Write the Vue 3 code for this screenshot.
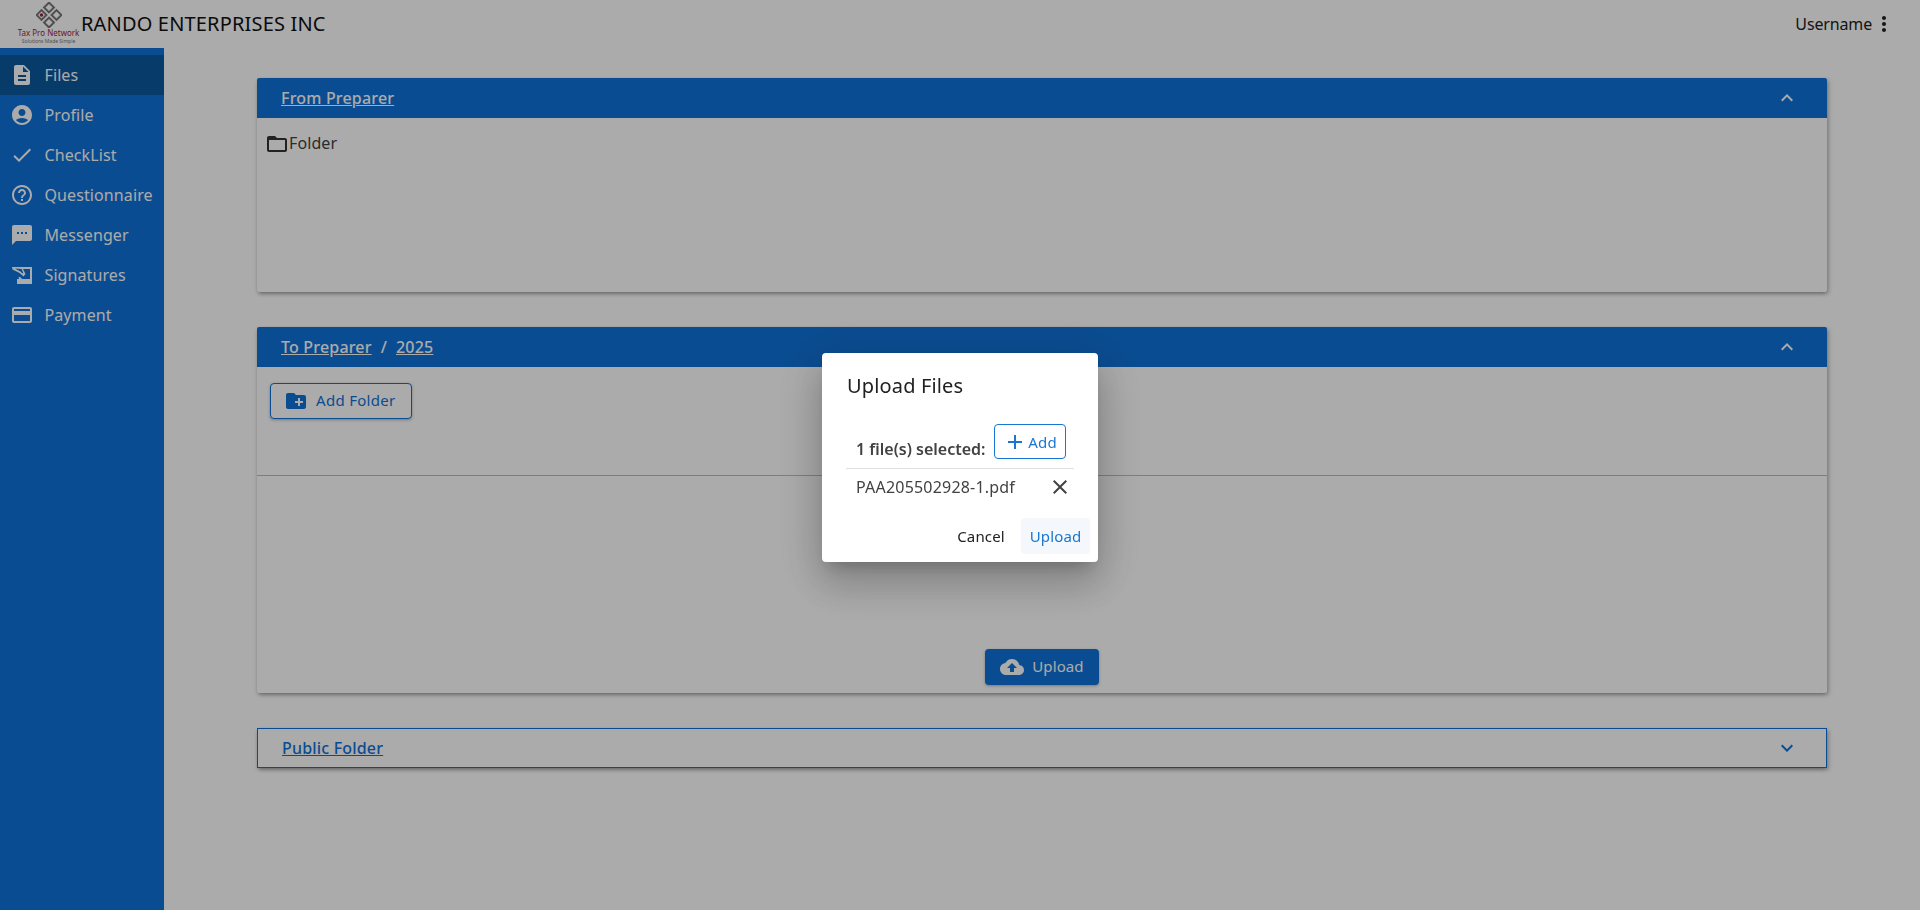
<script setup>
const menu = [
  { label: 'Files', active: true, d: 'M14 2H6c-1.1 0-1.99.9-1.99 2L4 20c0 1.1.89 2 1.99 2H18c1.1 0 2-.9 2-2V8l-6-6zm2 16H8v-2h8v2zm0-4H8v-2h8v2zm-3-5V3.5L18.5 9H13z' },
  { label: 'Profile', d: 'M12 2C6.48 2 2 6.48 2 12s4.48 10 10 10 10-4.48 10-10S17.52 2 12 2zm0 4c1.93 0 3.5 1.57 3.5 3.5S13.93 13 12 13s-3.5-1.57-3.5-3.5S10.07 6 12 6zm0 14c-2.03 0-4.43-.82-6.14-2.88C7.55 15.8 9.68 15 12 15s4.45.8 6.14 2.12C16.43 19.18 14.03 20 12 20z' },
  { label: 'CheckList', d: 'M9 16.17 4.83 12l-1.42 1.41L9 19 21 7l-1.41-1.41z' },
  { label: 'Questionnaire', d: 'M11 18h2v-2h-2v2zm1-16C6.48 2 2 6.48 2 12s4.48 10 10 10 10-4.48 10-10S17.52 2 12 2zm0 18c-4.41 0-8-3.59-8-8s3.59-8 8-8 8 3.59 8 8-3.59 8-8 8zm0-14c-2.21 0-4 1.79-4 4h2c0-1.1.9-2 2-2s2 .9 2 2c0 2-3 1.75-3 5h2c0-2.25 3-2.5 3-5 0-2.21-1.79-4-4-4z' },
  { label: 'Messenger', d: 'M20 2H4c-1.1 0-1.99.9-1.99 2L2 22l4-4h14c1.1 0 2-.9 2-2V4c0-1.1-.9-2-2-2zM9 11H7V9h2v2zm4 0h-2V9h2v2zm4 0h-2V9h2v2z' },
  { label: 'Signatures', d: 'M2 4h20v17H7v-5h2l-.5-2.2 2 .4L12 16h8V6h-7l2.5 5-2 2.5L9.500 10 2.500 6.500zM5 5.500l5.500 3 2 2 .7-1L11.500 6z' },
  { label: 'Payment', d: 'M20 4H4c-1.11 0-1.99.89-1.99 2L2 18c0 1.11.89 2 2 2h16c1.11 0 2-.89 2-2V6c0-1.11-.89-2-2-2zm0 14H4v-6h16v6zm0-10H4V6h16v2z' },
]
const less = 'M12 8l-6 6 1.41 1.41L12 10.83l4.59 4.58L18 14z'
const more = 'M16.59 8.59 12 13.17 7.41 8.59 6 10l6 6 6-6z'
</script>

<template>
  <div class="page">
    <header class="topbar">
      <div class="brand">
        <div class="logo">
          <svg class="logo-mark" viewBox="0 0 26 26">
            <g fill="none" stroke="#777" stroke-width="2">
              <rect x="9.500" y="2" width="7" height="7" transform="rotate(45 13 5.500)" />
              <rect x="2" y="9.500" width="7" height="7" transform="rotate(45 5.500 13)" />
              <rect x="17" y="9.500" width="7" height="7" transform="rotate(45 20.500 13)" />
              <rect x="9.500" y="17" width="7" height="7" transform="rotate(45 13 20.500)" />
            </g>
            <circle cx="5.500" cy="13" r="1.800" fill="#a3243a" />
          </svg>
          <span class="logo-name">Tax Pro Network</span>
          <span class="logo-tag">Solutions Made Simple</span>
        </div>
        <span class="company">RANDO ENTERPRISES INC</span>
      </div>
      <div class="user">
        <span>Username</span>
        <svg class="i24" viewBox="0 0 24 24"><path d="M12 8c1.1 0 2-.9 2-2s-.9-2-2-2-2 .9-2 2 .9 2 2 2zm0 2c-1.1 0-2 .9-2 2s.9 2 2 2 2-.9 2-2-.9-2-2-2zm0 6c-1.1 0-2 .9-2 2s.9 2 2 2 2-.9 2-2-.9-2-2-2z" /></svg>
      </div>
    </header>

    <div class="body">
      <nav class="sidebar">
        <a v-for="m in menu" :key="m.label" class="nav-item" :class="{ active: m.active }">
          <svg class="i24" viewBox="0 0 24 24"><path :d="m.d" /></svg>
          <span>{{ m.label }}</span>
        </a>
      </nav>

      <main class="main">
        <section class="panel panel-a">
          <div class="panel-head">
            <div class="crumbs"><a>From Preparer</a></div>
            <svg class="i24" viewBox="0 0 24 24"><path :d="less" /></svg>
          </div>
          <div class="panel-a-body">
            <div class="folder">
              <svg class="i24" viewBox="0 0 24 24"><path d="M20 6h-8l-2-2H4c-1.1 0-1.99.9-1.99 2L2 18c0 1.1.9 2 2 2h16c1.1 0 2-.9 2-2V8c0-1.1-.9-2-2-2zm0 12H4V8h16v10z" /></svg>
              <span>Folder</span>
            </div>
          </div>
        </section>

        <section class="panel panel-b">
          <div class="panel-head">
            <div class="crumbs"><a>To Preparer</a><span class="sep">/</span><a>2025</a></div>
            <svg class="i24" viewBox="0 0 24 24"><path :d="less" /></svg>
          </div>
          <div class="toolbar">
            <button class="btn-outline">
              <svg class="i24" viewBox="0 0 24 24"><path d="M20 6h-8l-2-2H4c-1.11 0-1.99.89-1.99 2L2 18c0 1.11.89 2 2 2h16c1.11 0 2-.89 2-2V8c0-1.11-.89-2-2-2zm-1 8h-3v3h-2v-3h-3v-2h3V9h2v3h3v2z" /></svg>
              <span>Add Folder</span>
            </button>
          </div>
          <div class="drop">
            <button class="btn-solid">
              <svg class="i24" viewBox="0 0 24 24"><path d="M19.35 10.04C18.67 6.59 15.64 4 12 4 9.11 4 6.6 5.64 5.35 8.04 2.34 8.36 0 10.91 0 14c0 3.31 2.69 6 6 6h13c2.76 0 5-2.24 5-5 0-2.64-2.05-4.78-4.65-4.96zM14 13v4h-4v-4H7l5-5 5 5h-3z" /></svg>
              <span>Upload</span>
            </button>
          </div>
        </section>

        <section class="panel panel-c">
          <div class="crumbs"><a>Public Folder</a></div>
          <svg class="i24" viewBox="0 0 24 24"><path :d="more" /></svg>
        </section>
      </main>
    </div>

    <div class="backdrop">
      <div class="dialog">
        <h2 class="dialog-title">Upload Files</h2>
        <div class="dialog-content">
          <div class="sel-row">
            <strong>1 file(s) selected:</strong>
            <button class="btn-add">
              <svg class="i24" viewBox="0 0 24 24"><path d="M19 13h-6v6h-2v-6H5v-2h6V5h2v6h6v2z" /></svg>
              <span>Add</span>
            </button>
          </div>
          <div class="file-row">
            <span>PAA205502928-1.pdf</span>
            <svg class="i24" viewBox="0 0 24 24"><path d="M19 6.41 17.59 5 12 10.59 6.41 5 5 6.41 10.59 12 5 17.59 6.41 19 12 13.41 17.59 19 19 17.59 13.41 12z" /></svg>
          </div>
        </div>
        <div class="dialog-actions">
          <button class="btn-text cancel">Cancel</button>
          <button class="btn-text primary">Upload</button>
        </div>
      </div>
    </div>
  </div>
</template>

<style>
html, body { margin: 0; background: #fff; }
</style>

<style scoped>
* { box-sizing: border-box; }
.page {
  height: 910px;
  display: flex;
  flex-direction: column;
  font-family: "Noto Sans", "Open Sans", sans-serif;
  font-size: 16px;
  color: #212121;
  overflow: hidden;
  background: #fff;
}
.i24 { width: 24px; height: 24px; fill: currentColor; flex: none; display: block; }
button { font-family: inherit; cursor: pointer; }

.topbar {
  height: 48px;
  flex: none;
  display: flex;
  align-items: center;
  justify-content: space-between;
  padding: 0 24px 0 17px;
  background: #fff;
}
.brand { display: flex; align-items: center; }
.logo {
  width: 63px;
  height: 42px;
  margin-top: -3px;
  display: flex;
  flex-direction: column;
  align-items: center;
}
.logo-mark { width: 26px; height: 26px; flex: none; }
.logo-name { font-size: 8px; line-height: 9px; color: #a3243a; white-space: nowrap; }
.logo-tag { font-size: 5px; line-height: 7px; color: #777; white-space: nowrap; margin-top: 1px; }
.company { font-size: 20px; letter-spacing: .17px; color: #111; margin-left: 1px; margin-top: -1px; }
.user { display: flex; align-items: center; font-size: 16px; letter-spacing: -.15px; margin-top: -1px; color: #212121; }

.body { flex: 1; display: flex; min-height: 0; }
.sidebar {
  width: 164px;
  flex: none;
  background: #1072d8;
  padding-top: 7px;
  color: #fff;
}
.nav-item {
  height: 40px;
  display: flex;
  align-items: center;
  gap: 10.500px;
  padding-left: 10px;
  font-size: 16px;
  letter-spacing: .1px;
}
.nav-item.active { background: #0b589f; }

.main {
  flex: 1;
  padding: 30px 93px 0;
  display: flex;
  flex-direction: column;
  gap: 35px;
}
.panel {
  border-radius: 2px;
  background: #fff;
  box-shadow: 0 2px 4px -1px rgba(0,0,0,.3), 2px 2px 4px rgba(0,0,0,.2);
}
.panel-head {
  height: 40px;
  background: #1072d8;
  color: #fff;
  display: flex;
  align-items: center;
  justify-content: space-between;
  padding: 0 28px 0 24px;
  border-radius: 2px 2px 0 0;
}
.crumbs { display: flex; gap: 9px; font-size: 16px; font-weight: 500; letter-spacing: .18px; }
.crumbs a { text-decoration: underline; }
.panel-a { height: 214px; }
.panel-a-body { padding: 13px 8px; }
.folder { display: flex; align-items: flex-start; color: #424242; line-height: 24px; letter-spacing: .1px; }
.folder .i24 { margin-top: 1px; color: #333; }
.panel-b { height: 366px; display: flex; flex-direction: column; }
.toolbar { height: 109px; flex: none; padding: 16px 13px; border-bottom: 1px solid #bdbdbd; }
.btn-outline {
  height: 36px;
  width: 142px;
  display: flex;
  align-items: center;
  gap: 8px;
  padding: 0 13px;
  background: #fff;
  border: 1px solid #1072d8;
  border-radius: 4px;
  color: #1072d8;
  font-size: 15px;
  letter-spacing: .3px;
  box-shadow: 0 1px 3px rgba(0,0,0,.3);
}
.btn-outline span, .btn-solid span { margin-bottom: 2px; }
.drop { flex: 1; display: flex; align-items: flex-end; justify-content: center; padding-bottom: 8px; }
.btn-solid {
  height: 36px;
  width: 114px;
  display: flex;
  align-items: center;
  justify-content: center;
  gap: 8px;
  background: #1072d8;
  color: #fff;
  border: 0;
  border-radius: 4px;
  font-size: 15px;
  letter-spacing: .1px;
  padding: 0 0 0 0;
  box-shadow: 0 1px 3px rgba(0,0,0,.3);
}
.panel-c {
  height: 40px;
  border: 1px solid #1072d8;
  border-radius: 0;
  color: #1072d8;
  display: flex;
  align-items: center;
  justify-content: space-between;
  padding: 0 27px 0 24px;
}

.backdrop {
  position: fixed;
  inset: 0;
  background: rgba(0,0,0,.33);
  display: flex;
  align-items: flex-start;
  justify-content: center;
  padding-top: 353px;
}
.dialog {
  width: 276px;
  height: 209px;
  background: #fff;
  border-radius: 4px;
  box-shadow: 0 11px 15px -7px rgba(0,0,0,.2), 0 24px 38px 3px rgba(0,0,0,.14), 0 9px 46px 8px rgba(0,0,0,.12);
  display: flex;
  flex-direction: column;
}
.dialog-title { margin: 0; padding: 17px 24px 0 25px; font-size: 20px; font-weight: 400; line-height: 32px; letter-spacing: .15px; color: #212121; }
.dialog-content { margin: 0 24px; padding-top: 22px; flex: 1; }
.sel-row {
  height: 45px;
  padding: 0 8px 9px 10px;
  display: flex;
  align-items: flex-end;
  justify-content: space-between;
  border-bottom: 1px solid #e0e0e0;
  font-size: 16px;
}
.sel-row strong { font-weight: 600; color: #424242; white-space: nowrap; line-height: 22px; margin-bottom: -1px; }
.btn-add {
  width: 72px;
  height: 35px;
  display: flex;
  align-items: center;
  justify-content: center;
  gap: 1px;
  background: #fff;
  border: 1px solid #1976d2;
  border-radius: 4px;
  color: #1976d2;
  font-size: 15px;
  letter-spacing: .2px;
  padding: 0;
}
.file-row {
  height: 36px;
  display: flex;
  align-items: center;
  justify-content: space-between;
  padding: 0 2px 0 10px;
  font-size: 16px;
  letter-spacing: .2px;
  color: #424242;
}
.dialog-actions { display: flex; justify-content: flex-end; gap: 8px; padding: 0 8px 8px; }
.btn-text {
  height: 36px;
  padding: 0;
  background: transparent;
  border: 0;
  border-radius: 4px;
  font-size: 15px;
  letter-spacing: .15px;
  color: #212121;
}
.btn-text.cancel { width: 64px; }
.btn-text.primary { width: 69px; color: #1976d2; background: #f4f8fd; }
</style>
